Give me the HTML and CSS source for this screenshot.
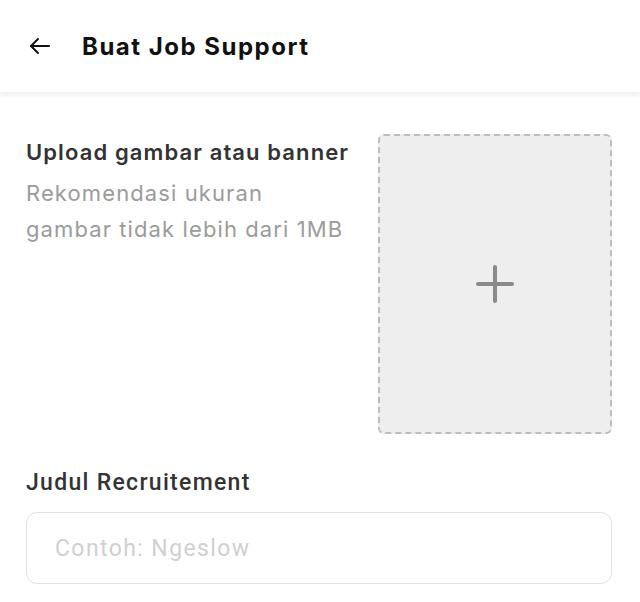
FILE: index.html
```html
<!DOCTYPE html>
<html lang="id">
<head>
  <meta charset="UTF-8">
  <title>Buat Job Support</title>
  <meta name="viewport" content="width=device-width, initial-scale=1">
  <link rel="stylesheet" href="styles.css">
</head>
<body>
  <header class="topbar">
    <svg class="back" width="24" height="24" viewBox="0 0 24 24" fill="none" stroke="#111" stroke-width="2" stroke-linecap="round" stroke-linejoin="round">
      <path d="M21 12H3"/>
      <path d="M10 5l-7 7 7 7"/>
    </svg>
    <h1>Buat Job Support</h1>
  </header>

  <main class="form">
    <div class="upload-row">
      <div class="upload-text">
        <h2>Upload gambar atau banner</h2>
        <p>Rekomendasi ukuran<br>gambar tidak lebih dari 1MB</p>
      </div>
      <div class="dropzone">
        <svg width="40" height="40" viewBox="0 0 40 40" stroke="#8a8a8a" stroke-width="4" stroke-linecap="round">
          <path d="M20 3v34"/>
          <path d="M3 20h34"/>
        </svg>
      </div>
    </div>

    <label class="field-label" for="judul">Judul Recruitement</label>
    <input type="text" id="judul" class="field" placeholder="Contoh: Ngeslow">
  </main>
</body>
</html>
```

FILE: styles.css
```css
body {
  margin: 0;
  background: #fff;
  font-family: Inter, "Noto Sans", sans-serif;
  color: #333;
}
.topbar {
  height: 92px;
  display: flex; align-items: center;
  padding: 0 28px;
  gap: 30px;
  box-shadow: 0 3px 3px rgba(0,0,0,0.05);
  border-bottom: 1px solid #f0f1f3;
}
.topbar h1 {
  margin: 0;
  font-size: 24px; font-weight: 700;
  letter-spacing: 1.5px;
  color: #111;
}
.form { padding: 41px 28px 0 26px; }
.upload-row { display: flex; justify-content: space-between; }
.upload-text { width: 350px; }
.upload-text h2 {
  margin: 5px 0 10px;
  font-size: 22px; font-weight: 600;
  letter-spacing: 1.1px;
  color: #333;
}
.upload-text p {
  margin: 0;
  font-size: 22px; line-height: 36px;
  letter-spacing: 1.1px;
  color: #9b9b9b;
}
.dropzone {
  width: 230px; height: 296px;
  background: #eee;
  border: 2px dashed #bdbdbd;
  border-radius: 6px;
  display: flex; align-items: center; justify-content: center;
}
.field-label {
  display: block;
  margin: 35px 0 16px;
  font-family: Roboto, sans-serif;
  font-size: 23px; font-weight: 500;
  letter-spacing: 1.3px;
  color: #333;
}
.field {
  box-sizing: border-box;
  width: 100%; height: 72px;
  padding: 0 28px;
  border: 1.5px solid #e2e2e2; border-radius: 11px;
  font-family: Roboto, sans-serif; font-size: 23px;
  letter-spacing: 1.4px;
  outline: none;
}
.field::placeholder { color: #d0d0d0; }
```
